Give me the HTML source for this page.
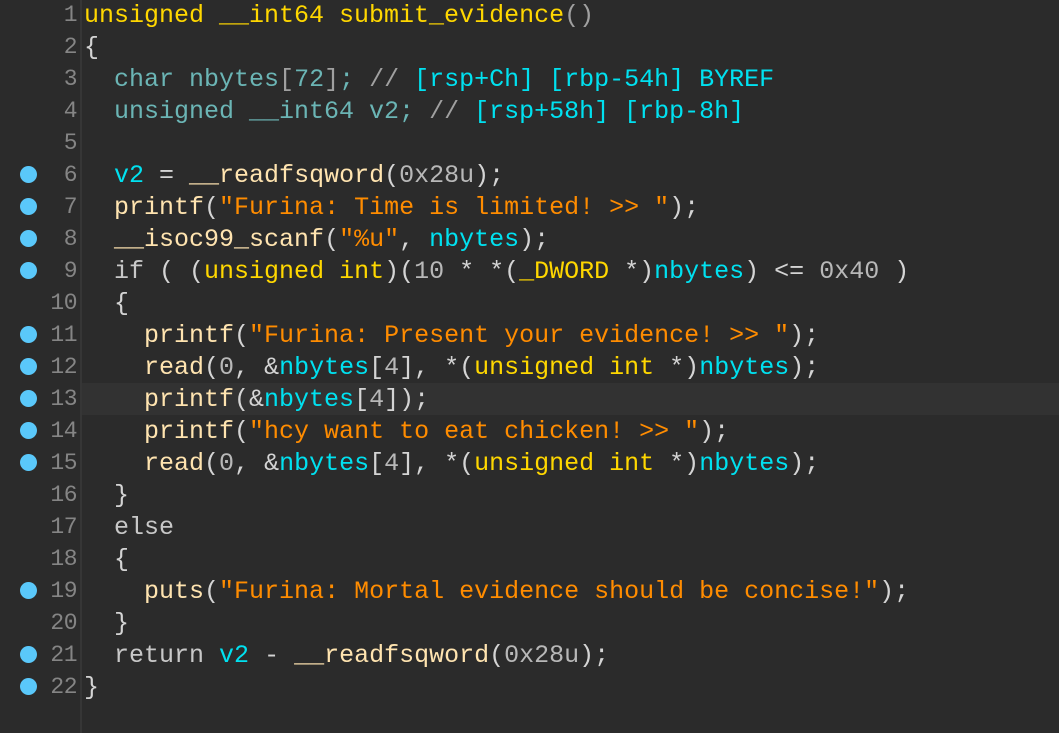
<!DOCTYPE html>
<html><head><style>
body{margin:0;width:1059px;height:733px;background:#2b2b2b;overflow:hidden;font-family:"Liberation Mono",monospace;font-size:25px;}
.sep{position:absolute;left:80px;top:0;width:2px;height:733px;background:#363636}
.hl{position:absolute;left:82px;top:383px;width:977px;height:32px;background:#323232}
.ln{position:absolute;left:0;width:77px;text-align:right;color:#858585;height:32px;line-height:32px;font-size:23px;letter-spacing:-0.5px}
.dot{position:absolute;left:20px;width:17px;height:17px;border-radius:50%;background:#5ac8fa}
.c{position:absolute;left:84px;height:32px;line-height:33px;white-space:pre;color:#d4d4d4}
.y{color:#ffd700}.t{color:#6bb5b5}.f{color:#ffe4b0}.v{color:#00e1f0}.s{color:#ff8c00}.n{color:#b8b8b8}.p{color:#d4d4d4}.k{color:#c8c8c8}.g{color:#a0a0a0}
</style></head><body>
<div class="sep"></div><div class="hl"></div>
<div class="ln" style="top:-1px">1</div><div class="c" style="top:-1px"><span class="y">unsigned __int64 submit_evidence</span><span class="g">()</span></div>
<div class="ln" style="top:31px">2</div><div class="c" style="top:31px">{</div>
<div class="ln" style="top:63px">3</div><div class="c" style="top:63px">  <span class="t">char nbytes</span><span class="g">[</span><span class="t">72</span><span class="g">]</span><span class="t">; </span><span class="g">// </span><span class="v">[rsp+Ch] [rbp-54h] BYREF</span></div>
<div class="ln" style="top:95px">4</div><div class="c" style="top:95px">  <span class="t">unsigned __int64 v2; </span><span class="g">// </span><span class="v">[rsp+58h] [rbp-8h]</span></div>
<div class="ln" style="top:127px">5</div>
<div class="dot" style="top:166px"></div><div class="ln" style="top:159px">6</div><div class="c" style="top:159px">  <span class="v">v2</span> = <span class="f">__readfsqword</span>(<span class="n">0x28u</span>);</div>
<div class="dot" style="top:198px"></div><div class="ln" style="top:191px">7</div><div class="c" style="top:191px">  <span class="f">printf</span>(<span class="s">"Furina: Time is limited! &gt;&gt; "</span>);</div>
<div class="dot" style="top:230px"></div><div class="ln" style="top:223px">8</div><div class="c" style="top:223px">  <span class="f">__isoc99_scanf</span>(<span class="s">"%u"</span>, <span class="v">nbytes</span>);</div>
<div class="dot" style="top:262px"></div><div class="ln" style="top:255px">9</div><div class="c" style="top:255px">  <span class="k">if</span> ( (<span class="y">unsigned int</span>)(<span class="n">10</span> * *(<span class="y">_DWORD</span> *)<span class="v">nbytes</span>) &lt;= <span class="n">0x40</span> )</div>
<div class="ln" style="top:287px">10</div><div class="c" style="top:287px">  {</div>
<div class="dot" style="top:326px"></div><div class="ln" style="top:319px">11</div><div class="c" style="top:319px">    <span class="f">printf</span>(<span class="s">"Furina: Present your evidence! &gt;&gt; "</span>);</div>
<div class="dot" style="top:358px"></div><div class="ln" style="top:351px">12</div><div class="c" style="top:351px">    <span class="f">read</span>(<span class="n">0</span>, &amp;<span class="v">nbytes</span>[<span class="n">4</span>], *(<span class="y">unsigned int</span> *)<span class="v">nbytes</span>);</div>
<div class="dot" style="top:390px"></div><div class="ln" style="top:383px">13</div><div class="c" style="top:383px">    <span class="f">printf</span>(&amp;<span class="v">nbytes</span>[<span class="n">4</span>]);</div>
<div class="dot" style="top:422px"></div><div class="ln" style="top:415px">14</div><div class="c" style="top:415px">    <span class="f">printf</span>(<span class="s">"hcy want to eat chicken! &gt;&gt; "</span>);</div>
<div class="dot" style="top:454px"></div><div class="ln" style="top:447px">15</div><div class="c" style="top:447px">    <span class="f">read</span>(<span class="n">0</span>, &amp;<span class="v">nbytes</span>[<span class="n">4</span>], *(<span class="y">unsigned int</span> *)<span class="v">nbytes</span>);</div>
<div class="ln" style="top:479px">16</div><div class="c" style="top:479px">  }</div>
<div class="ln" style="top:511px">17</div><div class="c" style="top:511px">  <span class="k">else</span></div>
<div class="ln" style="top:543px">18</div><div class="c" style="top:543px">  {</div>
<div class="dot" style="top:582px"></div><div class="ln" style="top:575px">19</div><div class="c" style="top:575px">    <span class="f">puts</span>(<span class="s">"Furina: Mortal evidence should be concise!"</span>);</div>
<div class="ln" style="top:607px">20</div><div class="c" style="top:607px">  }</div>
<div class="dot" style="top:646px"></div><div class="ln" style="top:639px">21</div><div class="c" style="top:639px">  <span class="k">return</span> <span class="v">v2</span> - <span class="f">__readfsqword</span>(<span class="n">0x28u</span>);</div>
<div class="dot" style="top:678px"></div><div class="ln" style="top:671px">22</div><div class="c" style="top:671px">}</div>
</body></html>
